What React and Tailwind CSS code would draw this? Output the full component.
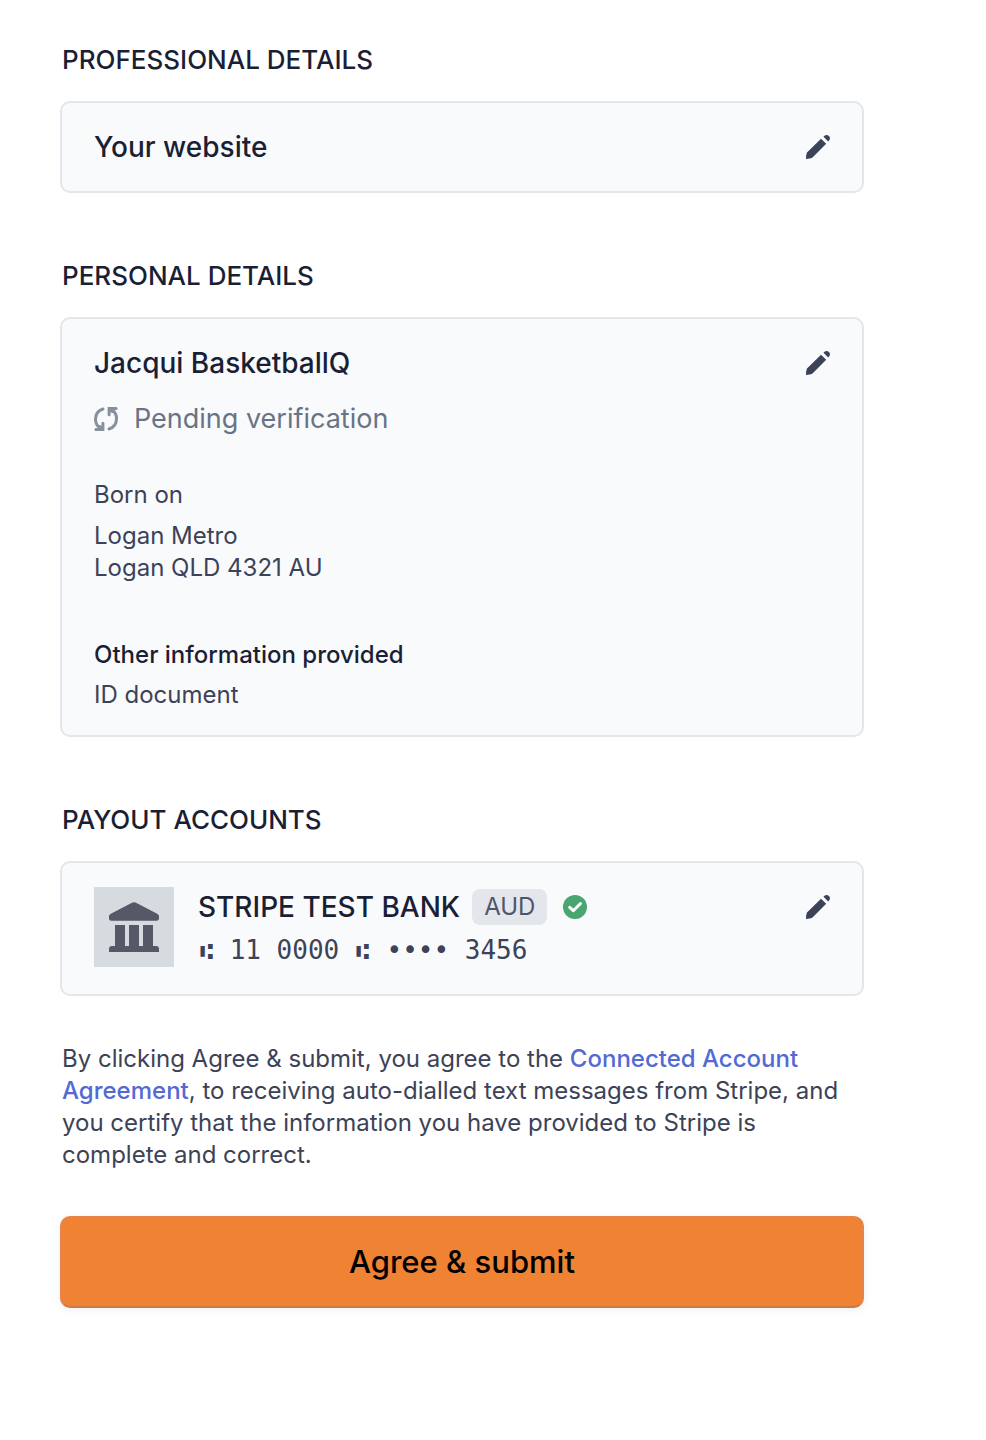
function PencilIcon() {
  return (
    <svg viewBox="0 0 24 24" className="size-6" fill="currentColor" aria-hidden="true">
      <path d="M1 17.600 15 3.700l5.200 5L6.500 22.600C4.800 23.600 2.500 24 0 24c0-2.400.2-4.600 1-6.400Z" />
      <path d="m17.500 1.700.7-.7c1.500-1.300 3.500-1.300 4.700-.1 1.300 1.300 1.500 3.100.1 4.700l-.8.8Z" />
    </svg>
  );
}

function PendingIcon() {
  return (
    <svg viewBox="0 0 24 24" className="size-6 text-[#87909f]" fill="none" stroke="currentColor" strokeWidth="3" strokeLinecap="round" aria-hidden="true">
      <path d="M9 2C4 3.600 1.500 7.500 1.500 12.500c0 3.700 1.600 6.500 4.700 8.700" />
      <path d="M1.900 22.500h7v-6.300M8.500 22 5.500 19.500" />
      <path d="M15 22c5-1.600 7.500-5.500 7.500-10.500 0-3.700-1.600-6.500-4.700-8.700" />
      <path d="M22.100 1.500h-7v6.300M15.500 2l3 2.500" />
    </svg>
  );
}

function BankIcon() {
  return (
    <svg viewBox="0 0 80 80" className="size-20 shrink-0" aria-hidden="true">
      <path fill="#d6dbdf" d="M0 0h80v80H0z" />
      <g fill="#555867">
        <path d="M37.500 16c1.700-1.100 3.300-1.100 5 0l20.200 10.600c1.600.8 2.300 1.700 2.300 3.200v1.500c0 1.500-.8 2.500-2.300 2.500H17.300c-1.500 0-2.300-1-2.300-2.500v-1.500c0-1.500.7-2.400 2.300-3.200Z" />
        <path d="M21 38h10v21h4V38h10v21h4V38h10v21h3c2 0 3 1 3 3v3H15v-3c0-2 1-3 3-3h3Z" />
      </g>
    </svg>
  );
}

function VerifiedIcon() {
  return (
    <svg viewBox="0 0 24 24" className="size-6" role="img" aria-label="Verified">
      <circle cx="12" cy="12" r="12" fill="#4ba571" />
      <path d="m6.700 12.300 3.600 3.400 7.200-7.200" fill="none" stroke="#fff" strokeWidth="3" strokeLinecap="round" strokeLinejoin="round" />
    </svg>
  );
}

function EditButton({ label }) {
  return (
    <button type="button" aria-label={label} className="flex h-8 shrink-0 items-center text-[#3c4257]">
      <PencilIcon />
    </button>
  );
}

function TransitSymbol() {
  return <span className="inline-block w-4 text-center text-[22px] leading-none">⑆</span>;
}

function Section({ title, children }) {
  return (
    <section>
      <h2 className="mb-[25px] px-0.5 text-[26px] leading-8 font-medium">{title}</h2>
      {children}
    </section>
  );
}

const card = "flex items-start justify-between rounded-[10px] border-2 border-[#e3e6eb] bg-[#f9fafc] px-8";

export default function App() {
  return (
    <main className="bg-white pt-11 pr-[122px] pb-[132px] pl-[60px] font-['Inter',sans-serif] text-[24px] leading-8 text-[#3c4257]">
      <div className="flex flex-col gap-[67px] text-[#1a1f36]">
        <Section title="PROFESSIONAL DETAILS">
          <div className={`${card} pt-7 pb-7`}>
            <h3 className="text-[28px] leading-8 font-medium">Your website</h3>
            <EditButton label="Edit website" />
          </div>
        </Section>

        <Section title="PERSONAL DETAILS">
          <div className={`${card} pt-7 pb-6`}>
            <div>
              <h3 className="text-[28px] leading-8 font-medium">Jacqui BasketballQ</h3>
              <p className="mt-6 flex items-center gap-4 text-[27px] leading-8 text-[#697386]">
                <PendingIcon />
                Pending verification
              </p>
              <div className="mt-11 text-[#3c4257]">
                <p>Born on</p>
                <address className="mt-[9px] not-italic">
                  Logan Metro
                  <br />
                  Logan QLD 4321 AU
                </address>
              </div>
              <h4 className="mt-[55px] font-medium">Other information provided</h4>
              <p className="mt-2 text-[#3c4257]">ID document</p>
            </div>
            <EditButton label="Edit personal details" />
          </div>
        </Section>

        <Section title="PAYOUT ACCOUNTS">
          <div className={`${card} pt-6 pb-[27px]`}>
            <div className="flex items-start gap-6">
              <BankIcon />
              <div>
                <div className="flex h-10 items-center gap-4">
                  <div className="flex items-center gap-3">
                    <h3 className="text-[28px] leading-8 font-medium">STRIPE TEST BANK</h3>
                    <span className="rounded-lg bg-[#e3e6eb] px-3 py-0.5 text-[24px] text-[#4f566b]">AUD</span>
                  </div>
                  <VerifiedIcon />
                </div>
                <p className="mt-[7px] font-['DejaVu_Sans_Mono',monospace] text-[26px] leading-8 text-[#3c4257]">
                  <TransitSymbol /> 11 0000 <TransitSymbol /> •••• 3456
                </p>
              </div>
            </div>
            <div className="pt-1">
              <EditButton label="Edit payout account" />
            </div>
          </div>
        </Section>
      </div>

      <p className="mt-[47px] px-0.5">
        By clicking Agree &amp; submit, you agree to the{" "}
        <a href="#agreement" className="font-medium text-[#5469d4]">Connected Account Agreement</a>, to receiving auto-dialled text messages from Stripe, and you certify that the information you have provided to Stripe is complete and correct.
      </p>

      <button type="submit" className="mt-[45px] flex w-full items-center justify-center rounded-[10px] border-2 border-[#e5844b] border-b-[#cc7947] bg-[#ef8233] py-6 text-[31px] leading-10 font-medium text-black shadow-[0_2px_8px_rgba(60,66,87,0.08)]">
        Agree &amp; submit
      </button>
    </main>
  );
}
